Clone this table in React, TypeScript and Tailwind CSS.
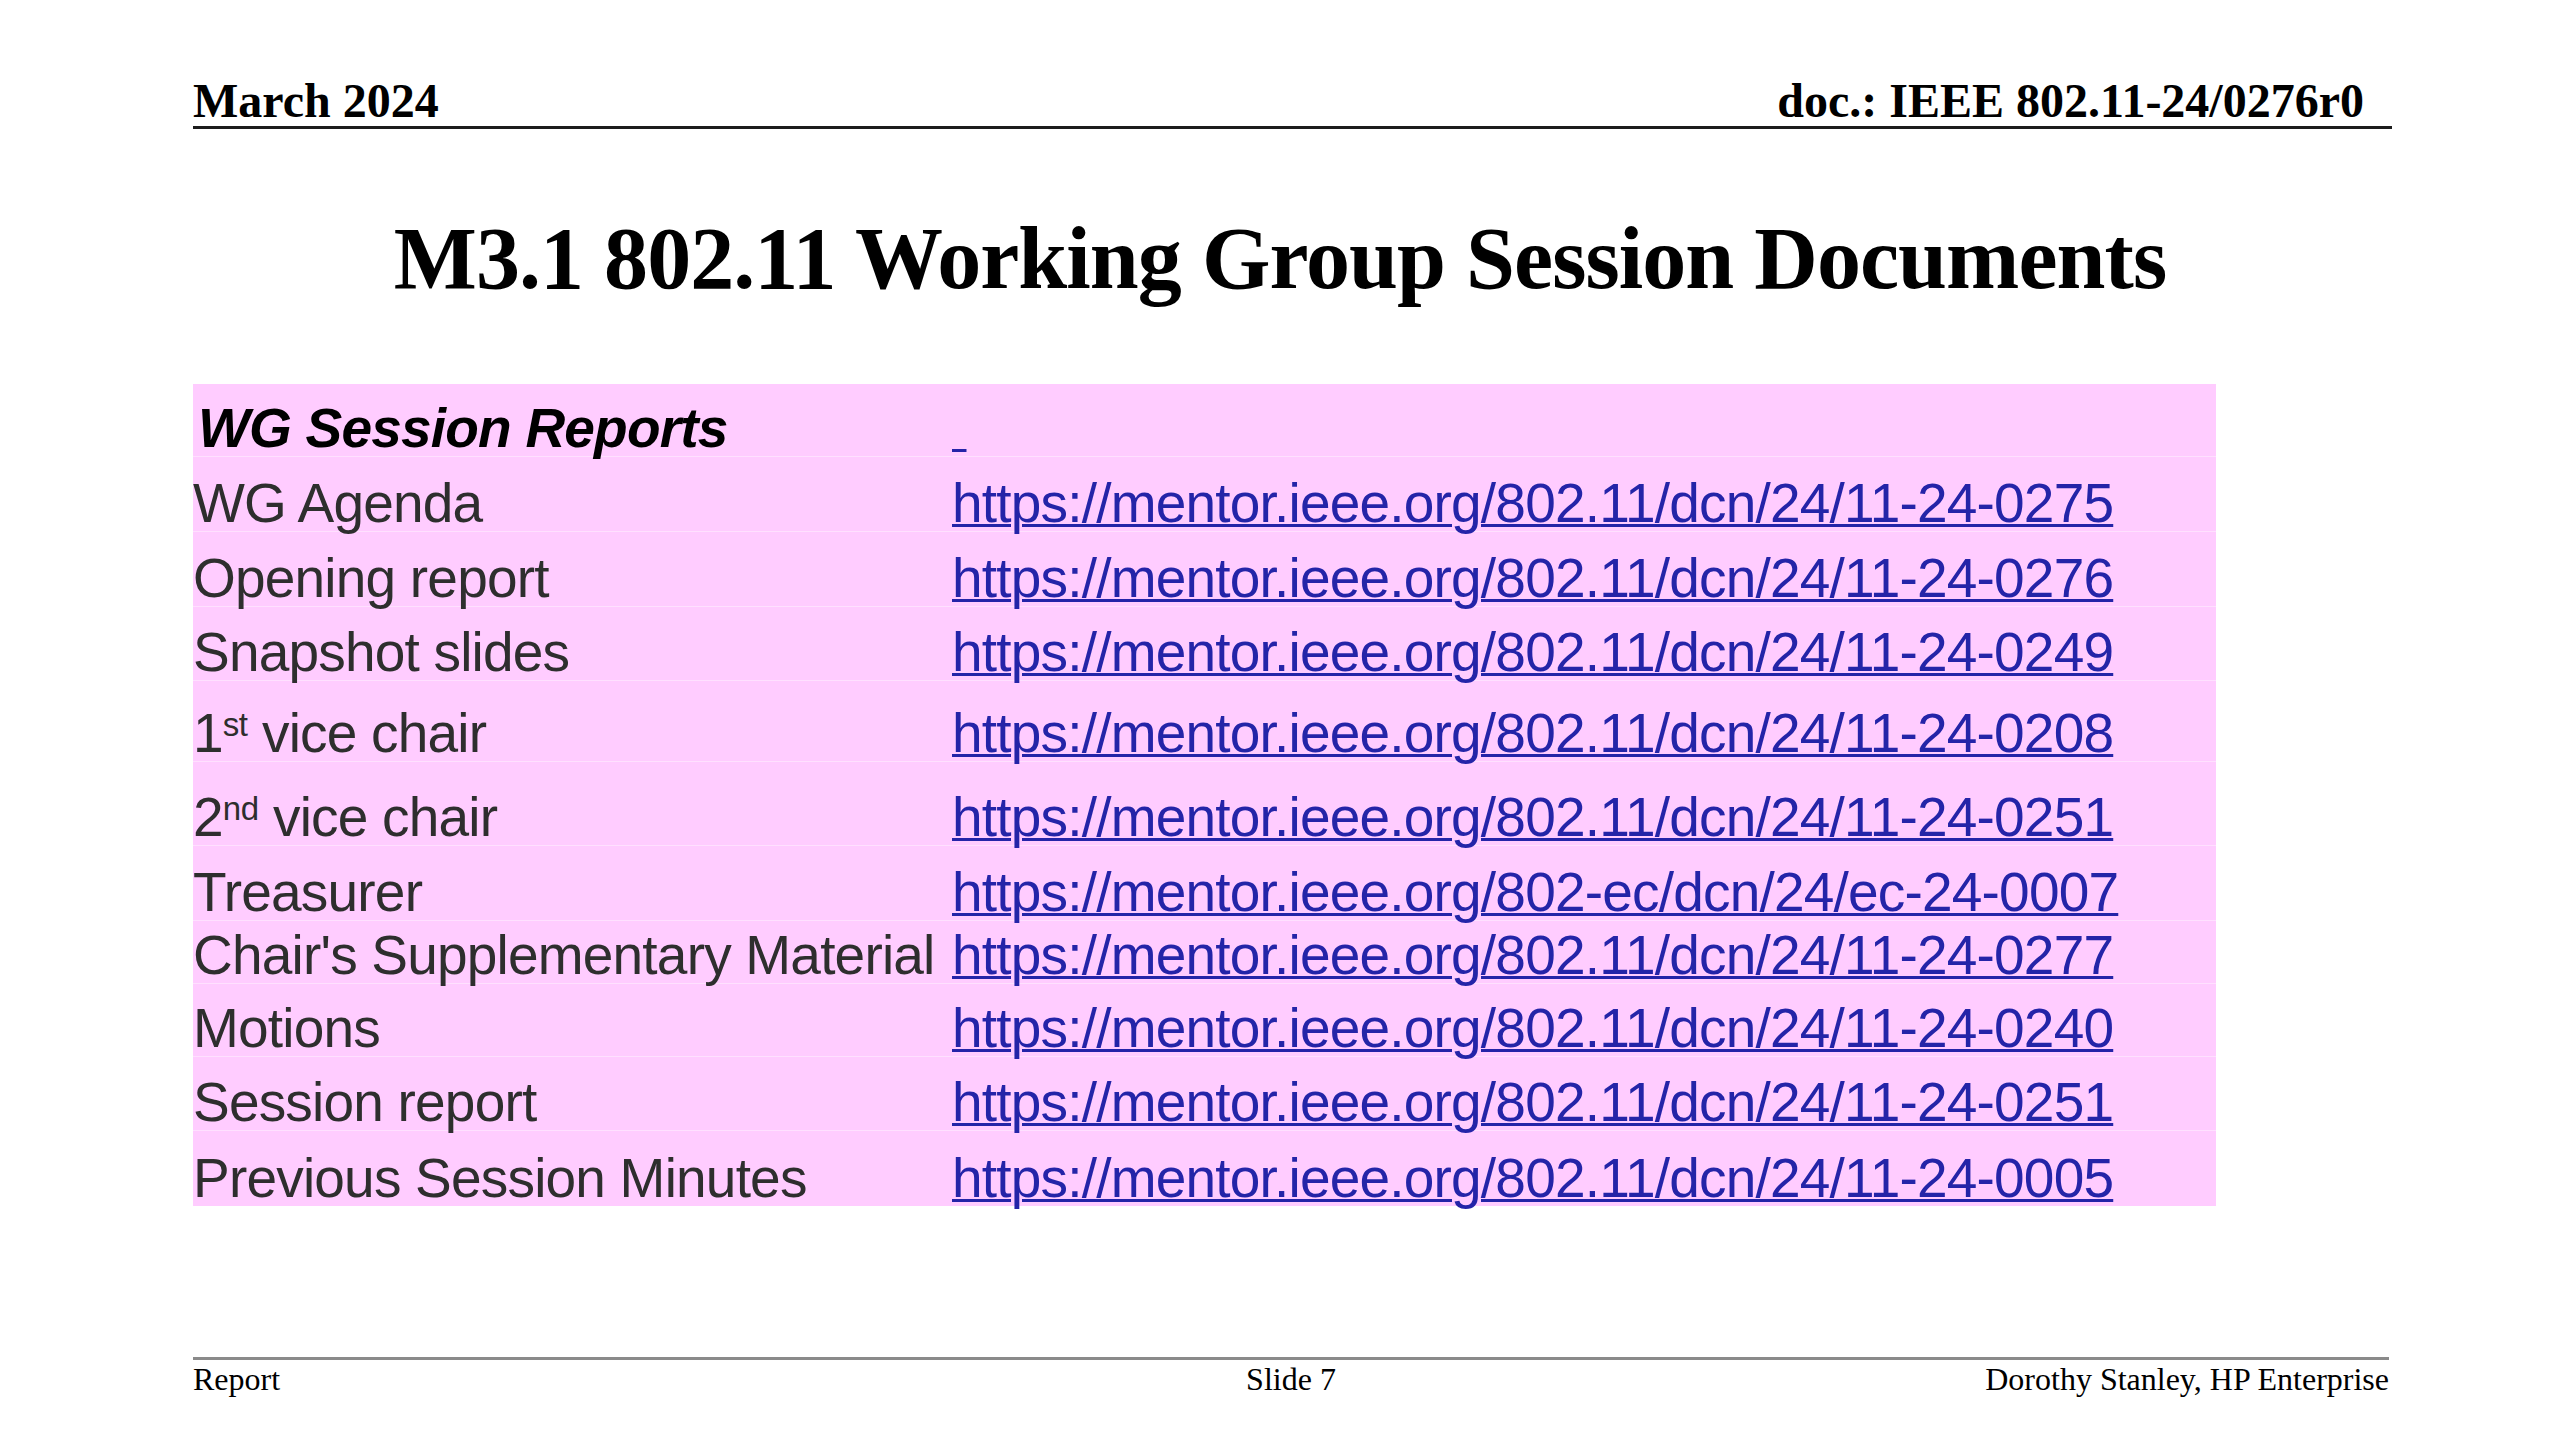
import React from "react";

type Row = { label: React.ReactNode; link: string | null; h: number; head?: boolean };

const base = "https://mentor.ieee.org/802.11/dcn/24/11-24-";

const rows: Row[] = [
  { label: "WG Session Reports", link: null, h: 73, head: true },
  { label: "WG Agenda", link: base + "0275", h: 75 },
  { label: "Opening report", link: base + "0276", h: 75 },
  { label: "Snapshot slides", link: base + "0249", h: 74 },
  {
    label: (
      <>
        1<sup className="text-[33px] tracking-[-0.5px]">st</sup> vice chair
      </>
    ),
    link: base + "0208",
    h: 81,
  },
  {
    label: (
      <>
        2<sup className="text-[33px] tracking-[-0.5px]">nd</sup> vice chair
      </>
    ),
    link: base + "0251",
    h: 84,
  },
  { label: "Treasurer", link: "https://mentor.ieee.org/802-ec/dcn/24/ec-24-0007", h: 75 },
  { label: "Chair's Supplementary Material", link: base + "0277", h: 63 },
  { label: "Motions", link: base + "0240", h: 73 },
  { label: "Session report", link: base + "0251", h: 74 },
  { label: "Previous Session Minutes", link: base + "0005", h: 75 },
];

export default function App() {
  return (
    <div className="w-[2560px] h-[1440px] bg-white overflow-hidden flex flex-col">
      {/* Header */}
      <div className="ml-[193px] w-[2199px] pt-[77px]">
        <div className="flex justify-between pr-[28px] text-[48px] leading-[48px] font-bold text-black font-['Liberation_Serif',serif]">
          <span>March 2024</span>
          <span>doc.: IEEE 802.11-24/0276r0</span>
        </div>
        <div className="mt-[1px] h-[3px] bg-[#1c1c1c]" />
      </div>

      {/* Title */}
      <h1 className="mt-[86px] text-center text-[88px] leading-[88px] font-bold tracking-[-0.95px] text-black font-['Liberation_Serif',serif]">
        M3.1 802.11 Working Group Session Documents
      </h1>

      {/* Table */}
      <div className="mt-[81px] ml-[193px] w-[2023px] bg-[#ffccff] flex flex-col font-['Liberation_Sans',Arial,sans-serif] text-[55px] leading-[55px] tracking-[-0.8px]">
        {rows.map((r, i) => (
          <div
            key={i}
            className={
              "flex items-end " +
              (i < rows.length - 1 ? "border-b border-[#ffe0ff]" : "")
            }
            style={{ height: r.h }}
          >
            <div
              className={
                "w-[759px] shrink-0 whitespace-nowrap " +
                (r.head ? "font-bold italic text-black pl-[5px]" : "text-[#2e2e2e]")
              }
            >
              {r.label}
            </div>
            <div className="whitespace-nowrap">
              {r.link ? (
                <a href="#" className="text-[#2424a8] underline decoration-[3px]">
                  {r.link}
                </a>
              ) : (
                <a href="#" className="text-[#2424a8] underline decoration-[3px]">
                  {"\u00a0"}
                </a>
              )}
            </div>
          </div>
        ))}
      </div>

      {/* Footer */}
      <div className="mt-[151px] ml-[193px] w-[2196px]">
        <div className="h-[3px] bg-[#8a8a8a]" />
        <div className="mt-[3px] grid grid-cols-3 text-[32px] leading-[32px] text-black font-['Liberation_Serif',serif]">
          <span className="text-left">Report</span>
          <span className="text-center">Slide 7</span>
          <span className="text-right">Dorothy Stanley, HP Enterprise</span>
        </div>
      </div>
    </div>
  );
}
